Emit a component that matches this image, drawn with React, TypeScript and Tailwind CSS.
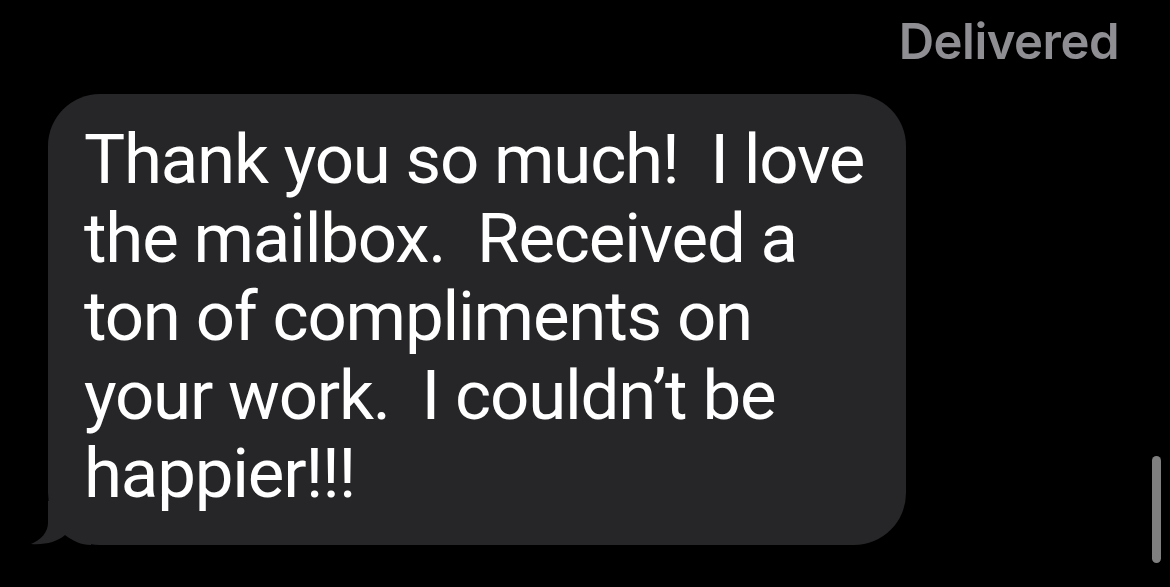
const LINES = [
  "Thank you so much!  I love",
  "the mailbox.  Received a",
  "ton of compliments on",
  "your work.  I couldn\u2019t be",
  "happier!!!",
];

export default function App() {
  return (
    <div
      className="w-[1170px] h-[587px] bg-black overflow-hidden relative"
      style={{ fontFamily: "Inter, 'Liberation Sans', sans-serif" }}
    >
      <div className="flex justify-end pr-[51px] pt-[12px] h-[94px]">
        <span className="text-[49px] leading-[60px] font-semibold text-[#8e8e93] tracking-[-0.5px]">
          Delivered
        </span>
      </div>

      <div className="relative ml-[48px] w-[858px]">
        <div className="rounded-[52px] bg-[#262629] pl-[36px] pt-[27px] pb-[31px] font-[Roboto,sans-serif]">
          {LINES.map((line) => (
            <div
              key={line}
              className="text-white text-[69px] leading-[78.5px] whitespace-pre tracking-[-1.2px]"
            >
              {line}
            </div>
          ))}
        </div>
        <svg className="absolute left-[-17px] bottom-0" width="60" height="44" viewBox="0 0 60 44">
          <path
            d="M17 0 L17 22 C17 31 10 39 0 43 C14 44 26 41 34 34 C42 40 50 44 60 44 L60 0 Z"
            fill="#262629"
          />
        </svg>
      </div>

      <div className="absolute left-[1152px] top-[456px] w-[9px] h-[107px] rounded-full bg-[#7f7f7f]" />
    </div>
  );
}
